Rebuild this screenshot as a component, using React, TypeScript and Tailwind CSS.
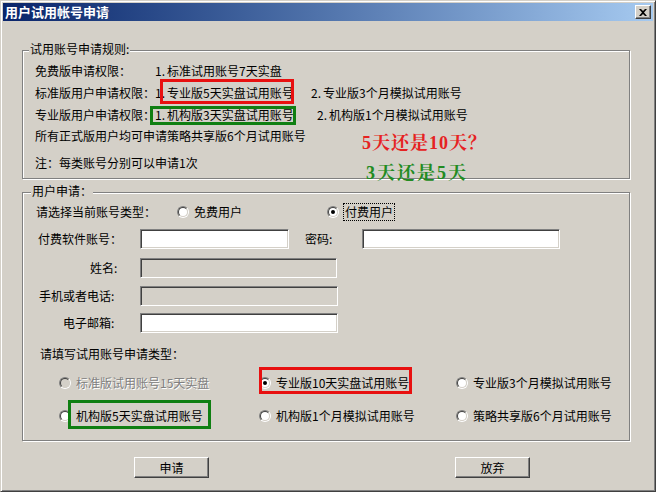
import React from "react";

function Radio({ checked = false, disabled = false }: { checked?: boolean; disabled?: boolean }) {
  return (
    <span className="relative inline-block w-[12px] h-[12px] shrink-0 rounded-full border border-t-[#808080] border-l-[#808080] border-r-white border-b-white">
      <span
        className={`absolute inset-0 rounded-full border border-t-[#404040] border-l-[#404040] border-r-[#D4D0C8] border-b-[#D4D0C8] ${
          disabled ? "bg-[#D4D0C8]" : "bg-white"
        }`}
      />
      {checked && <span className="absolute left-[3px] top-[3px] w-[4px] h-[4px] rounded-full bg-black" />}
    </span>
  );
}

function Field({ cls }: { cls: string }) {
  return (
    <div
      className={`h-[20px] shrink-0 border border-t-[#808080] border-l-[#808080] border-r-white border-b-white shadow-[inset_1px_1px_0_#404040,inset_-1px_-1px_0_#D4D0C8] ${cls}`}
    />
  );
}

function Button({ label, cls }: { label: string; cls: string }) {
  return (
    <div
      className={`w-[75px] h-[21px] flex items-center justify-center border border-t-white border-l-white border-r-[#404040] border-b-[#404040] shadow-[inset_-1px_-1px_0_#808080] ${cls}`}
    >
      {label}
    </div>
  );
}

export default function App() {
  return (
    <div className="w-[656px] h-[492px] bg-[#D4D0C8] border border-t-[#D4D0C8] border-l-[#D4D0C8] border-r-[#404040] border-b-[#404040] shadow-[inset_1px_1px_0_#fff,inset_-1px_-1px_0_#808080] p-[2px] flex flex-col text-[12px] leading-[16px] text-black font-['SimSun','Noto_Sans_CJK_SC',sans-serif] overflow-hidden">
      {/* Title bar */}
      <div className="h-[18px] shrink-0 flex items-center justify-between pl-[2px] pr-[2px] bg-gradient-to-r from-[#0A246A] to-[#A6CAF0]">
        <span className="text-white font-bold text-[13px] leading-[16px]">用户试用帐号申请</span>
        <div className="w-[16px] h-[14px] flex items-center justify-center bg-[#D4D0C8] border border-t-white border-l-white border-r-[#404040] border-b-[#404040] shadow-[inset_-1px_-1px_0_#808080]">
          <svg width="8" height="7" viewBox="0 0 8 7">
            <path d="M0 0h2l2 2 2-2h2L5 3.5 8 7H6L4 5 2 7H0l3-3.5z" fill="#000" />
          </svg>
        </div>
      </div>

      {/* Client */}
      <div className="flex flex-col">
        {/* Group 1 */}
        <div className="relative ml-[19px] mt-[29px] w-[608px] h-[129px] border border-[#808080] shadow-[inset_1px_1px_0_#fff,1px_1px_0_#fff] pt-[9px]">
          <span className="absolute left-[6px] top-[-10px] px-[1px] bg-[#D4D0C8]">试用账号申请规则:</span>

          <div className="h-[22px] flex items-center pl-[12px]">
            <span className="w-[120px] shrink-0">免费版申请权限：</span>
            <span className="inline-block w-[12px]">1.</span>
            <span>标准试用账号7天实盘</span>
          </div>

          <div className="relative h-[22px] flex items-center pl-[12px]">
            <span className="w-[120px] shrink-0">标准版用户申请权限：</span>
            <span className="w-[156px] shrink-0 flex">
              <span className="inline-block w-[12px]">1.</span>
              <span>专业版5天实盘试用账号</span>
            </span>
            <span className="inline-block w-[12px]">2.</span>
            <span>专业版3个月模拟试用账号</span>
            <div className="absolute left-[137px] top-[-3px] w-[134px] h-[25px] border-[3px] border-[#E81010]" />
          </div>

          <div className="relative h-[21px] flex items-center pl-[12px]">
            <span className="w-[120px] shrink-0">专业版用户申请权限：</span>
            <span className="w-[162px] shrink-0 flex">
              <span className="inline-block w-[12px]">1.</span>
              <span>机构版3天实盘试用账号</span>
            </span>
            <span className="inline-block w-[12px]">2.</span>
            <span>机构版1个月模拟试用账号</span>
            <div className="absolute left-[127px] top-[2px] w-[146px] h-[19px] border-[3px] border-[#0F7F12]" />
          </div>

          <div className="h-[22px] flex items-center pl-[12px]">所有正式版用户均可申请策略共享版6个月试用账号</div>

          <div className="mt-[5px] h-[22px] flex items-center pl-[12px]">注：每类账号分别可以申请1次</div>

          <span className="absolute left-[339px] top-[82px] z-10 text-[18px] leading-[20px] font-bold tracking-[1px] text-[#E62222] font-['Liberation_Serif','Noto_Serif_CJK_SC','Noto_Sans_CJK_SC',serif]">
            5天还是10天？
          </span>
          <span className="absolute left-[343px] top-[112px] z-10 text-[18px] leading-[20px] font-bold tracking-[2px] text-[#228B22] font-['Liberation_Serif','Noto_Serif_CJK_SC','Noto_Sans_CJK_SC',serif]">
            3天还是5天
          </span>
        </div>

        {/* Group 2 */}
        <div className="relative ml-[19px] mt-[13px] w-[608px] h-[249px] border border-[#808080] shadow-[inset_1px_1px_0_#fff,1px_1px_0_#fff] pt-[8px]">
          <span className="absolute left-[8px] top-[-10px] px-[1px] bg-[#D4D0C8]">用户申请：</span>

          <div className="h-[22px] flex items-center pl-[13px]">
            <span className="w-[141px] shrink-0">请选择当前账号类型：</span>
            <span className="w-[150px] shrink-0 flex items-center">
              <Radio />
              <span className="ml-[5px]">免费用户</span>
            </span>
            <Radio checked />
            <span className="ml-[4px] px-[1px] h-[18px] flex items-center border border-dotted border-black">付费用户</span>
          </div>

          <div className="h-[32px] flex items-center">
            <span className="w-[117px] shrink-0 pl-[15px]">付费软件账号：</span>
            <Field cls="w-[149px] bg-white" />
            <span className="ml-[16px] w-[57px] shrink-0">密码:</span>
            <Field cls="w-[198px] bg-white" />
          </div>

          <div className="h-[26px] flex items-center">
            <span className="w-[117px] shrink-0 pl-[67px]">姓名:</span>
            <Field cls="w-[197px] bg-[#D4D0C8]" />
          </div>

          <div className="h-[29px] flex items-center">
            <span className="w-[117px] shrink-0 pl-[16px]">手机或者电话:</span>
            <Field cls="w-[198px] bg-[#D4D0C8]" />
          </div>

          <div className="h-[25px] flex items-center">
            <span className="w-[117px] shrink-0 pl-[40px]">电子邮箱:</span>
            <Field cls="w-[198px] bg-white" />
          </div>

          <div className="mt-[8px] h-[22px] flex items-center pl-[17px]">请填写试用账号申请类型：</div>

          <div className="relative mt-[6px] h-[23px] flex items-center pl-[36px]">
            <span className="w-[200px] shrink-0 flex items-center">
              <Radio disabled />
              <span className="ml-[5px] text-[#808080] [text-shadow:1px_1px_0_#fff]">标准版试用账号15天实盘</span>
            </span>
            <span className="w-[197px] shrink-0 flex items-center">
              <Radio checked />
              <span className="ml-[5px]">专业版10天实盘试用账号</span>
            </span>
            <span className="flex items-center">
              <Radio />
              <span className="ml-[5px]">专业版3个月模拟试用账号</span>
            </span>
            <div className="absolute left-[236px] top-[-4px] w-[153px] h-[27px] border-[3px] border-[#E81010]" />
          </div>

          <div className="relative mt-[10px] h-[23px] flex items-center pl-[36px]">
            <span className="w-[200px] shrink-0 flex items-center">
              <Radio />
              <span className="ml-[5px]">机构版5天实盘试用账号</span>
            </span>
            <span className="w-[197px] shrink-0 flex items-center">
              <Radio />
              <span className="ml-[5px]">机构版1个月模拟试用账号</span>
            </span>
            <span className="flex items-center">
              <Radio />
              <span className="ml-[5px]">策略共享版6个月试用账号</span>
            </span>
            <div className="absolute left-[45px] top-[-4px] w-[143px] h-[29px] border-[3px] border-[#0F7F12]" />
          </div>
        </div>

        {/* Buttons */}
        <div className="mt-[16px] flex">
          <Button label="申请" cls="ml-[131px]" />
          <Button label="放弃" cls="ml-[246px]" />
        </div>
      </div>
    </div>
  );
}
